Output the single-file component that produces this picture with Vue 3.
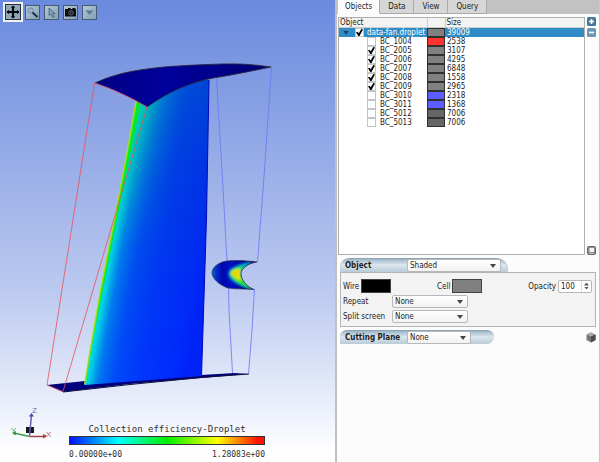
<script setup>
import { ref } from 'vue'

const tabs = ['Objects', 'Data', 'View', 'Query']
const activeTab = ref('Objects')
const rootOn = ref(true)
const shading = ref('Shaded')
const repeat = ref('None')
const split = ref('None')
const plane = ref('None')
const opacity = ref(100)

const parts = ref([
  { name: 'BC_1004', on: false, color: '#ff3333', size: 2538 },
  { name: 'BC_2005', on: true, color: '#808080', size: 3107 },
  { name: 'BC_2006', on: true, color: '#808080', size: 4295 },
  { name: 'BC_2007', on: true, color: '#808080', size: 6848 },
  { name: 'BC_2008', on: true, color: '#808080', size: 1558 },
  { name: 'BC_2009', on: true, color: '#808080', size: 2965 },
  { name: 'BC_3010', on: false, color: '#5c5cff', size: 2318 },
  { name: 'BC_3011', on: false, color: '#5c5cff', size: 1368 },
  { name: 'BC_5012', on: false, color: '#666666', size: 7006 },
  { name: 'BC_5013', on: false, color: '#666666', size: 7006 }
])
</script>

<template>
  <div class="app">
    <main class="viewport">
      <svg class="scene" viewBox="0 0 335 462" preserveAspectRatio="xMinYMin meet" aria-hidden="true">
        <defs>
          <linearGradient id="blade" x1="0" y1="80" x2="0" y2="385" gradientUnits="userSpaceOnUse">
            <stop offset="0" stop-color="#0048d0" />
            <stop offset=".3" stop-color="#0038e0" />
            <stop offset=".65" stop-color="#0030f4" />
            <stop offset="1" stop-color="#0030ff" />
          </linearGradient>
          <linearGradient id="glow" x1="109" y1="243" x2="208" y2="261" gradientUnits="userSpaceOnUse">
            <stop offset="0" stop-color="#00f0e0" />
            <stop offset=".06" stop-color="#00d4e4" stop-opacity=".9" />
            <stop offset=".14" stop-color="#00a8e8" stop-opacity=".62" />
            <stop offset=".3" stop-color="#0080ee" stop-opacity=".34" />
            <stop offset=".55" stop-color="#0050f0" stop-opacity=".2" />
            <stop offset=".85" stop-color="#0018f8" stop-opacity=".2" />
            <stop offset="1" stop-color="#0010f0" stop-opacity=".4" />
          </linearGradient>
          <linearGradient id="topglow" x1="132" y1="125" x2="180" y2="134" gradientUnits="userSpaceOnUse">
            <stop offset="0" stop-color="#00dca0" />
            <stop offset=".2" stop-color="#00c0b8" />
            <stop offset=".45" stop-color="#0090c8" stop-opacity=".7" />
            <stop offset="1" stop-color="#0060d0" stop-opacity="0" />
          </linearGradient>
          <linearGradient id="fade" x1="0" y1="100" x2="0" y2="250" gradientUnits="userSpaceOnUse">
            <stop offset="0" stop-color="#fff" />
            <stop offset="1" stop-color="#000" />
          </linearGradient>
          <mask id="topmask" maskUnits="userSpaceOnUse" x="80" y="70" width="140" height="320">
            <rect x="80" y="70" width="140" height="320" fill="url(#fade)" />
          </mask>
          <linearGradient id="shroud" x1="95" y1="70" x2="271" y2="70" gradientUnits="userSpaceOnUse">
            <stop offset="0" stop-color="#000084" />
            <stop offset=".4" stop-color="#00009c" />
            <stop offset="1" stop-color="#000074" />
          </linearGradient>
          <linearGradient id="drop" x1="212" y1="0" x2="245" y2="0" gradientUnits="userSpaceOnUse">
            <stop offset="0" stop-color="#0070c8" />
            <stop offset=".12" stop-color="#0030d0" />
            <stop offset=".3" stop-color="#0008b0" />
            <stop offset=".6" stop-color="#0010c0" />
            <stop offset="1" stop-color="#000090" />
          </linearGradient>
          <filter id="soft"><feGaussianBlur stdDeviation="0.8" /></filter>
          <clipPath id="dropclip"><path d="M257 262C249 263 241 268 241 273.500C241 280 247 287 254 289.500C244 289 234 289 228 288C219 285 212 278 212 273C212 267 219 262 227 261C238 260 250 261 257 262Z" /></clipPath>
          <clipPath id="bladeclip"><path d="M136 101L150 80H209L206.500 218L201.500 376L84.500 385L90 350L100 292L114.500 218L127 152Z" /></clipPath>
        </defs>

        <path d="M47 385L85 381L201 375L235 373L249 374L201 378L130 384L63 392Z" fill="#00007c" />
        <path d="M63 392L130 384.500L201 377.500L249 374" fill="none" stroke="#101038" stroke-width="1" />

        <g clip-path="url(#bladeclip)">
          <rect x="80" y="75" width="135" height="312" fill="url(#blade)" />
          <rect x="80" y="75" width="135" height="312" fill="url(#glow)" />
          <rect x="80" y="75" width="135" height="312" fill="url(#topglow)" mask="url(#topmask)" />
          <path d="M137 101L141 101L127 170L115 229L103 290L84 384L100 292L114.500 218L127 152Z" fill="#00e830" />
          <path d="M136 101L127 152L114.500 218L100 292L90 350L84.500 385" fill="none" stroke="#58e818" stroke-width="2.600" />
        </g>
        <path d="M136 101L127 152L114.500 218L100 292L90 350L84.500 384" fill="none" stroke="#c8dc20" stroke-width=".9" />
        <path d="M201.500 376L206.500 218L209 80" fill="none" stroke="#0008b8" stroke-width="1" />

        <path d="M95 83C106 78 120 73 140 70C164 66 194 65 222 64C243 63.500 257 65 271 67C251 71 233 75 213 78C188 83 168 92 147 107C132 98 113 89 95 83Z" fill="url(#shroud)" />
        <path d="M95 83C106 78 120 73 140 70C164 66 194 65 222 64C243 63.500 257 65 271 67C251 71 233 75 213 78C188 83 168 92 147 107" fill="none" stroke="#28283c" stroke-width=".9" />

        <g fill="none" stroke="#e8505c" stroke-width=".8">
          <path d="M147 107C132 98 113 89 94.500 83L47 385L63 391.500L147 107" />
        </g>
        <g fill="none" stroke="#6c74f4" stroke-width=".8">
          <path d="M216.500 78L222 170L227 261M228.500 288L229 310L232.500 373" />
          <path d="M271.500 67L264.500 170L257.500 262M254.500 289L252 330L248.500 374" />
        </g>

        <g clip-path="url(#dropclip)">
          <rect x="210" y="258" width="50" height="34" fill="url(#drop)" />
          <g filter="url(#soft)">
            <path d="M252 261C238 264 228 268 228 274C229 282 241 287 256 291L241 275Z" fill="#00a0c8" />
            <path d="M246 266C235 267 230 270 230 274C231 280 242 286 252 289L241 276L241 270Z" fill="#20e040" />
            <path d="M240 269C234 269 230 271 231 274C233 277 237 280 241 281L240 273Z" fill="#d8e810" />
            <circle cx="235.500" cy="273.500" r="2.200" fill="#ffc000" />
          </g>
        </g>
        <path d="M257 262C249 263 241 268 241 273.500C241 280 247 287 254 289.500C244 289 234 289 228 288C219 285 212 278 212 273C212 267 219 262 227 261C238 260 250 261 257 262Z" fill="none" stroke="#303040" stroke-width=".7" />

        <g fill="none" stroke-width="1.500">
          <path d="M26 427H34V433H26Z" fill="#181818" stroke="none" />
          <path d="M29.500 436L31.500 415" stroke="#6060b8" />
          <path d="M28.800 416.500L31.500 413L34 416.500Z" fill="#5050a8" stroke="none" />
          <path d="M29.500 436.500H46" stroke="#a84048" />
          <path d="M43 434L47 436L43 438.500Z" fill="#a84048" stroke="none" />
          <path d="M29.500 436.500L14 433" stroke="#38a048" />
          <path d="M16 431L12 433L15.500 435.500Z" fill="#309040" stroke="none" />
        </g>
        <g class="axis">
          <text x="32" y="413" fill="#7070b8">Z</text>
          <text x="46" y="437" fill="#b86068">X</text>
          <text x="11" y="433" fill="#50a860">Y</text>
        </g>
      </svg>

      <div class="tools">
        <button class="tool current" aria-label="Move">
          <svg viewBox="0 0 13 13"><path d="M6.500 1V12M1 6.500H12" stroke="#06090c" stroke-width="2" /><path d="M4.500 2.800L6.500 .5L8.500 2.800ZM4.500 10.200L6.500 12.500L8.500 10.200ZM2.800 4.500L.5 6.500L2.800 8.500ZM10.200 4.500L12.500 6.500L10.200 8.500Z" fill="#06090c" /></svg>
        </button>
        <button class="tool" aria-label="Zoom">
          <svg viewBox="0 0 13 13"><circle cx="4.500" cy="4.500" r="2.700" fill="#9db4c6" stroke="#6f8aa0" /><path d="M6.500 6.500L11.500 11" stroke="#152a44" stroke-width="1.800" /></svg>
        </button>
        <button class="tool" aria-label="Select">
          <svg viewBox="0 0 13 13"><path d="M4 2V9.500L6 8L7.500 11.500L9.300 10.700L7.800 7.500H10.300Z" fill="#7f9db5" stroke="#48657f" stroke-width=".8" /></svg>
        </button>
        <button class="tool" aria-label="Snapshot">
          <svg viewBox="0 0 13 13"><path d="M1 3H4V2H6.500V3H8L9 2H11L12 3.500V10.500H1Z" fill="#0a0d10" /><circle cx="7" cy="6.800" r="2.200" fill="none" stroke="#647680" stroke-width=".9" /><circle cx="7" cy="6.800" r=".7" fill="#647680" /></svg>
        </button>
        <button class="tool" aria-label="More">
          <svg viewBox="0 0 13 13"><path d="M2.500 4.500H10.500L6.500 9Z" fill="#587990" stroke="#7895a8" stroke-width=".6" /></svg>
        </button>
      </div>

      <div class="legend">
        <div class="legend-title">Collection efficiency-Droplet</div>
        <div class="ramp"></div>
        <div class="range"><span>0.00000e+00</span><span>1.28083e+00</span></div>
      </div>
    </main>

    <aside class="side">
      <nav class="tabs">
        <button v-for="t in tabs" :key="t" class="tab" :class="{ active: t === activeTab }" @click="activeTab = t">{{ t }}</button>
      </nav>

      <section class="browser">
        <div class="tree">
          <table>
            <colgroup><col class="c-name" /><col class="c-color" /><col /></colgroup>
            <thead>
              <tr><th>Object</th><th></th><th>Size</th></tr>
            </thead>
            <tbody>
              <tr class="selected">
                <td><label class="node root"><span class="twist"></span><input v-model="rootOn" type="checkbox" />data-fan.droplet</label></td>
                <td class="chip"><i :style="{ background: '#808080' }"></i></td>
                <td class="num">39009</td>
              </tr>
              <tr v-for="p in parts" :key="p.name">
                <td><label class="node"><input v-model="p.on" type="checkbox" />{{ p.name }}</label></td>
                <td class="chip"><i :style="{ background: p.color }"></i></td>
                <td class="num">{{ p.size }}</td>
              </tr>
            </tbody>
          </table>
        </div>
        <div class="rail">
          <button class="mini" aria-label="Expand"><svg viewBox="0 0 9 9"><rect width="9" height="9" rx="1.500" fill="#48779c" /><path d="M4.500 2V7M2 4.500H7" stroke="#fff" stroke-width="1.700" /></svg></button>
          <button class="mini" aria-label="Collapse"><svg viewBox="0 0 9 9"><rect width="9" height="9" rx="1.500" fill="#6b96b6" /><path d="M2 4.500H7" stroke="#fff" stroke-width="1.700" /></svg></button>
          <button class="mini save" aria-label="Save"><svg viewBox="0 0 9 9"><rect x=".5" y=".5" width="8" height="8" rx="1" fill="#8c8c8c" stroke="#666" /><rect x="2.500" y="2" width="4.500" height="4" fill="#f4f4f4" /><rect x="2.500" y="7" width="4" height="1" fill="#ccc" /></svg></button>
        </div>
      </section>

      <section>
        <header class="cap object-cap">
          <label for="shading">Object</label>
          <span class="pick"><select id="shading" v-model="shading"><option>Shaded</option><option>Wireframe</option></select></span>
        </header>
        <div class="group">
          <div class="line first">
            <span class="pair">Wire<button class="swatch black" aria-label="Wire colour"></button></span>
            <span class="pair">Cell<button class="swatch" aria-label="Cell colour"></button></span>
            <span class="pair"><label for="opacity">Opacity</label>
              <span class="spin"><input id="opacity" v-model="opacity" type="number" min="0" max="100" />
                <span class="steps"><button class="up" aria-label="Increase" @click="opacity++"></button><button class="down" aria-label="Decrease" @click="opacity--"></button></span>
              </span>
            </span>
          </div>
          <div class="line"><label for="repeat">Repeat</label><span class="pick"><select id="repeat" v-model="repeat"><option>None</option></select></span></div>
          <div class="line"><label for="split">Split screen</label><span class="pick"><select id="split" v-model="split"><option>None</option></select></span></div>
        </div>
      </section>

      <section class="plane-row">
        <header class="cap plane-cap">
          <label for="plane">Cutting Plane</label>
          <span class="pick"><select id="plane" v-model="plane"><option>None</option></select></span>
        </header>
        <button class="mini cube" aria-label="Show plane"><svg viewBox="0 0 10 11"><path d="M5 .5L9.500 2.500V8L5 10.500L.5 8V2.500Z" fill="#777" /><path d="M5 .5L9.500 2.500L5 4.500L.5 2.500Z" fill="#aaa" /><path d="M5 4.500L9.500 2.500V8L5 10.500Z" fill="#4c4c4c" /></svg></button>
      </section>
    </aside>
  </div>
</template>

<style>
body { margin: 0; background: #fff; }
</style>

<style scoped>
.app {
  display: grid;
  grid-template-columns: minmax(0, 1fr) 265px;
  min-height: 100vh;
  box-sizing: border-box;
  border-bottom: 1px solid #b4b4b4;
  font: 8px/9px "DejaVu Sans Condensed", "Noto Sans", sans-serif;
  color: #1c1c1c;
}
.app * { box-sizing: border-box; }
button, input, select { font: inherit; color: inherit; margin: 0; padding: 0; }
svg { display: block; }

.viewport {
  position: relative;
  overflow: hidden;
  background: linear-gradient(#6a8adf 0%, #8ca4e5 26%, #bccaf0 63%, #dfe6f8 82%, #fff 98%);
}
.scene { width: 100%; }
.axis { font: 8px "Liberation Sans", sans-serif; }

.tools { position: absolute; top: 2px; left: 3px; display: flex; align-items: center; gap: 4px; }
.tool {
  width: 15px;
  height: 15px;
  border: 1px solid #465a70;
  background: linear-gradient(135deg, #b4c8d8, #86a0b6);
}
.tool.current { width: 20px; height: 20px; border: 0; padding: 2px; background: #f0f0f0; margin-right: -2px; }
.tool.current svg { border: 1px solid #25313c; background: #91a8b8; }

.legend {
  position: absolute;
  left: 69px;
  bottom: 0;
  width: 196px;
  font-family: "DejaVu Sans Mono", "Liberation Mono", monospace;
  color: #303030;
  text-align: center;
}
.legend-title { font-size: 9px; line-height: 13px; white-space: nowrap; }
.ramp {
  height: 9px;
  border: 1px solid #333;
  background: linear-gradient(90deg, #0010ff, #00ffff 25%, #00f000 50%, #ffff00 76%, #ff1000 97%);
}
.range { display: flex; justify-content: space-between; padding: 5px 0 3px; }

.side {
  display: flex;
  flex-direction: column;
  padding: 0 3px;
  border-left: 2px solid #c0c0c0;
  border-right: 1px solid #c8c8c8;
  background: #fcfcfc;
}
.tabs { display: flex; margin: 0 -3px 3px; padding-left: 1px; background: #c2c2c2; height: 14px; }
.tab {
  border: 1px solid #aaa;
  border-width: 0 1px 1px 0;
  padding: 0 8px;
  background: #d6d6d6;
}
.tab.active { background: #fcfcfc; border-bottom-color: #fcfcfc; padding: 0 7px; }

.browser { display: grid; grid-template-columns: minmax(0, 1fr) 10px; gap: 2px; margin-left: -2px; margin-right: -1px; }
.tree { border: 1px solid #b0b0b0; background: #fff; min-height: 238px; }
table { width: 100%; border-collapse: collapse; table-layout: fixed; }
.c-name { width: 88px; }
.c-color { width: 18px; }
th { height: 9px; padding: 0 1px; text-align: left; font-weight: 400; background: #f3f3f3; border-right: 1px solid #ccc; border-bottom: 1px solid #ccc; }
th:last-child { border-right: 0; }
td { height: 9px; padding: 0; }
.num { padding-left: 2px; }
.selected { background: #308cc6; color: #fff; }
.node { display: flex; align-items: center; gap: 4px; height: 9px; padding-left: 28px; white-space: nowrap; }
.node.root { gap: 3px; padding-left: 4px; }
.twist { width: 6px; height: 4px; margin-right: 3px; background: #14405e; clip-path: polygon(0 0, 100% 0, 50% 100%); }
.node input {
  appearance: none;
  display: grid;
  place-items: center;
  width: 9px;
  height: 9px;
  border: 1px solid #c4c4c4;
  background: #fff;
}
.node input:checked::before {
  content: "";
  width: 7px;
  height: 7px;
  background: #000;
  clip-path: polygon(0 48%, 18% 38%, 40% 62%, 76% 0, 100% 8%, 50% 100%, 32% 100%);
}
.chip i { display: block; height: 9px; border: 1px solid #303030; }
.rail { display: flex; flex-direction: column; gap: 2px; }
.mini { width: 9px; height: 9px; border: 0; background: none; }
.save { margin-top: auto; }

.cap {
  display: flex;
  align-items: center;
  height: 14px;
  padding-left: 5px;
  border-top: 1px solid #8ca4b6;
  border-radius: 9px 12px 0 0;
  background: linear-gradient(#9db6c8, #dce6ed 45%, #b9cbd8);
  font-weight: 700;
}
.object-cap { width: 168px; margin-top: 3px; padding-right: 7px; }
.plane-cap { width: 154px; padding-right: 23px; border-radius: 9px 9px 9px 0; }
.cap label { flex: 1; white-space: nowrap; }
.cap .pick { width: 94px; font-weight: 400; }
.plane-cap .pick { width: 64px; }
.pick { position: relative; display: block; width: 76px; }
.pick select {
  appearance: none;
  display: block;
  width: 100%;
  height: 13px;
  padding: 0 2px;
  border: 1px solid #b8b8b8;
  border-radius: 2px;
  background: linear-gradient(#fff, #f2f2f2);
}
.pick::after {
  content: "";
  position: absolute;
  top: 5px;
  right: 5px;
  width: 6px;
  height: 4px;
  background: #444;
  clip-path: polygon(0 0, 100% 0, 50% 100%);
  pointer-events: none;
}
.group {
  display: grid;
  gap: 2px;
  padding: 6px 3px 3px 2px;
  border: 1px solid #b4b4b4;
  background: #f3f3f3;
}
.line { display: grid; grid-template-columns: 49px auto; justify-content: start; align-items: center; height: 13px; }
.line.first { display: flex; justify-content: space-between; height: 14px; }
.pair { display: flex; align-items: center; gap: 2px; }
.swatch { width: 30px; height: 14px; border: 1px solid #404040; background: #808080; }
.swatch.black { background: #000; }
.spin { display: flex; width: 34px; height: 13px; border: 1px solid #b8b8b8; border-radius: 2px; background: #fff; }
.spin input { appearance: textfield; width: 22px; border: 0; padding-left: 2px; background: none; }
.spin input::-webkit-inner-spin-button { appearance: none; }
.steps { display: grid; flex: 1; gap: 1px; padding: 2px; border-left: 1px solid #ddd; }
.steps button { border: 0; background: #555; }
.up { clip-path: polygon(0 100%, 50% 0, 100% 100%); }
.down { clip-path: polygon(0 0, 100% 0, 50% 100%); }
.plane-row { display: flex; justify-content: space-between; align-items: center; margin-top: 3px; }
.cube { width: 10px; height: 11px; }
</style>
